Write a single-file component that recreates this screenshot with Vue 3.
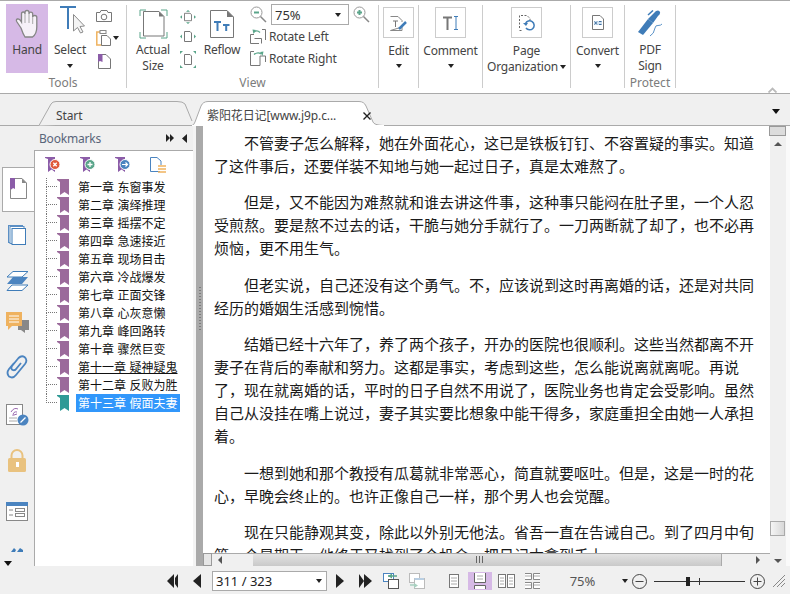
<script setup>
const bookmarks = ['第一章 东窗事发','第二章 演绎推理','第三章 摇摆不定','第四章 急速接近','第五章 现场目击','第六章 冷战爆发','第七章 正面交锋','第八章 心灰意懒','第九章 峰回路转','第十章 骤然巨变','第十一章 疑神疑鬼','第十二章 反败为胜','第十三章 假面夫妻']
const paragraphs = [
  ['不管妻子怎么解释，她在外面花心，这已是铁板钉钉、不容置疑的事实。知道','了这件事后，还要佯装不知地与她一起过日子，真是太难熬了。'],
  ['但是，又不能因为难熬就和谁去讲这件事，这种事只能闷在肚子里，一个人忍','受煎熬。要是熬不过去的话，干脆与她分手就行了。一刀两断就了却了，也不必再','烦恼，更不用生气。'],
  ['但老实说，自己还没有这个勇气。不，应该说到这时再离婚的话，还是对共同','经历的婚姻生活感到惋惜。'],
  ['结婚已经十六年了，养了两个孩子，开办的医院也很顺利。这些当然都离不开','妻子在背后的奉献和努力。这都是事实，考虑到这些，怎么能说离就离呢。再说','了，现在就离婚的话，平时的日子自然不用说了，医院业务也肯定会受影响。虽然','自己从没挂在嘴上说过，妻子其实要比想象中能干得多，家庭重担全由她一人承担','着。'],
  ['一想到她和那个教授有瓜葛就非常恶心，简直就要呕吐。但是，这是一时的花','心，早晚会终止的。也许正像自己一样，那个男人也会觉醒。'],
  ['现在只能静观其变，除此以外别无他法。省吾一直在告诫自己。到了四月中旬','第一个星期天，他终于又找到了个机会，把日记本拿到手上']
]
</script>

<template>
  <div class="app">
    <header class="ribbon">
      <section class="group g-tools">
        <div class="content">
          <div class="big hand">
            <div class="ic">
              <svg width="26" height="30" viewBox="0 0 26 30"><path d="M7 19 L3 13 Q1.500 10.500 3.500 10 Q5.500 9.500 7.500 13 V5 Q7.500 3 9.200 3 Q11 3 11 5 V3.500 Q11 1.500 13 1.500 Q15 1.500 15 3.500 V5 Q15 3.200 16.800 3.200 Q18.700 3.200 18.700 5.200 V8 Q18.700 6.500 20.700 6.500 Q22.800 6.500 22.800 8.500 V18 Q22.800 25 18.500 28 H11 Q9 25 7 19Z" fill="#f6f1f8" stroke="#858585" stroke-width="1.300"/><path d="M11 5V14M15 5V14M18.700 8V15" stroke="#a8a8a8" fill="none"/></svg>
            </div>
            <div class="lbl">Hand</div>
          </div>
          <div class="big select">
            <div class="ic">
              <svg width="26" height="29" viewBox="0 0 26 29"><path d="M0 2H16M8 2V24" stroke="#3f7cb8" stroke-width="2" fill="none"/><path d="M13.500 9.500 L24.500 21 L20 21.500 L23 27 L20.500 28 L17.500 22.500 L13.500 26Z" fill="#f4f4f4" stroke="#8c8c8c"/></svg>
            </div>
            <div class="lbl">Select</div>
            <span class="caret"></span>
          </div>
          <div class="minis">
            <svg width="16" height="13" viewBox="0 0 16 13"><path d="M.5 3.500H4L5 1.500H11L12 3.500H15.500V12.500H.5Z" fill="#fff" stroke="#777"/><circle cx="8" cy="8" r="2.800" fill="none" stroke="#777"/></svg>
            <div class="mini-row">
              <svg width="16" height="16" viewBox="0 0 16 16"><path d="M6 2H.8V15H6" fill="none" stroke="#efb25f" stroke-width="1.500"/><rect x="4" y=".5" width="6" height="3" fill="#fff" stroke="#888"/><path d="M5.500 5.500H11L14.500 9V15.500H5.500Z" fill="#fff" stroke="#777"/></svg>
              <span class="caret side"></span>
            </div>
            <svg width="13" height="15" viewBox="0 0 13 15"><path d="M.5.500H8L12.500 5V14.500H.5Z" fill="#fff" stroke="#777"/><path d="M0 0H4.500V8L2 7L0 8Z" fill="#8b5ca8"/></svg>
          </div>
        </div>
        <div class="glabel">Tools</div>
      </section>

      <section class="group g-view">
        <div class="content">
          <div class="big actual">
            <div class="ic">
              <svg width="29" height="30" viewBox="0 0 29 30"><path d="M1 7V1H7M22 1H28V7M1 23V29H7M22 29H28V23" fill="none" stroke="#5aa58a"/><path d="M4.500 2.500H20L25 7.500V27H4.500Z" fill="#fff" stroke="#777"/><path d="M20 2.500V7.500H25Z" fill="#777"/></svg>
            </div>
            <div class="lbl">Actual</div>
            <div class="lbl">Size</div>
          </div>
          <div class="fits">
            <svg width="16" height="14" viewBox="0 0 16 17" preserveAspectRatio="none"><path d="M4.500 4H10L11.500 5.500V13H4.500Z" fill="#fff" stroke="#777"/><path d="M8 0L10 2H6ZM8 17L10 15H6ZM0 8.500L2 6.500V10.500ZM16 8.500L14 6.500V10.500Z" fill="#5aa58a"/></svg>
            <svg width="16" height="13" viewBox="0 0 16 13"><path d="M4.500 1.500H10L11.500 3V11.500H4.500Z" fill="#fff" stroke="#777"/><path d="M0 6.500L2 4.500V8.500ZM16 6.500L14 4.500V8.500Z" fill="#5aa58a"/></svg>
            <svg class="fit3" width="16" height="17" viewBox="0 0 16 17"><path d="M4.500 3.500H10L11.500 5V13.500H4.500Z" fill="#fff" stroke="#777"/><path d="M0 0H3L0 3ZM16 0V3L13 0ZM0 17V14L3 17ZM16 17H13L16 14Z" fill="#5aa58a"/></svg>
          </div>
          <div class="big reflow">
            <div class="ic">
              <svg width="24" height="28" viewBox="0 0 24 28"><path d="M.5.500H17L23.500 7V27.500H.500Z" fill="#fff" stroke="#777"/><path d="M17 .5V7H23.500Z" fill="#777"/><path d="M4 12H11M7.500 12V21M13 15H19.500M16.200 15V21" stroke="#3f7cb8" stroke-width="2" fill="none"/></svg>
            </div>
            <div class="lbl">Reflow</div>
          </div>
          <div class="viewctl">
            <div class="zoomrow">
              <svg width="17" height="17" viewBox="0 0 17 17"><circle cx="6.500" cy="6.500" r="5.500" fill="#fff" stroke="#999"/><path d="M4 6.500H9" stroke="#5aa58a" stroke-width="2"/><path d="M10.500 10.500L16 16" stroke="#888" stroke-width="1.500"/></svg>
              <div class="combo"><span>75%</span><span class="caret"></span></div>
              <svg width="17" height="17" viewBox="0 0 17 17"><circle cx="6.500" cy="6.500" r="5.500" fill="#fff" stroke="#999"/><path d="M4 6.500H9M6.500 4V9" stroke="#5aa58a" stroke-width="2"/><path d="M10.500 10.500L16 16" stroke="#888" stroke-width="1.500"/></svg>
            </div>
            <div class="rot">
              <svg width="16" height="16" viewBox="0 0 16 16"><path d="M12 1.500H15.500V12M9 15.500H.5V6.500H4" fill="none" stroke="#777"/><path d="M4.500 10.500H11.500V15.500" fill="none" stroke="#777"/><path d="M10 4.500Q7 1.500 4 4" fill="none" stroke="#5aa58a" stroke-width="1.300"/><path d="M2.500 1.500L6 2 3.500 6Z" fill="#5aa58a"/></svg>
              <span>Rotate Left</span>
            </div>
            <div class="rot">
              <svg width="16" height="16" viewBox="0 0 16 16"><path d="M4 1.500H.5V15.500H10V6H15.500V12" fill="none" stroke="#777"/><path d="M4 4.500Q8 1.500 11 4" fill="none" stroke="#5aa58a" stroke-width="1.300"/><path d="M13.500 1.500L10 2 12.500 6Z" fill="#5aa58a"/></svg>
              <span>Rotate Right</span>
            </div>
          </div>
        </div>
        <div class="glabel">View</div>
      </section>

      <section class="group g-edit">
        <div class="content center">
          <div class="box"><svg width="18" height="18" viewBox="0 0 18 18"><path d="M.5 2.500H8L12 6.500V8M12 13V16.500H.5Z" fill="none" stroke="#888"/><path d="M3 7H8M5.500 7V13" stroke="#777" fill="none"/><path d="M9 15L16 8" stroke="#3f7cb8" stroke-width="2.500"/></svg></div>
          <div class="lbl tl">Edit</div><span class="caret"></span>
        </div>
      </section>
      <section class="group g-comment">
        <div class="content center">
          <div class="box"><svg width="16" height="14" viewBox="0 0 16 14"><path d="M0 1.500H9M4.500 1.500V14" stroke="#777" stroke-width="2" fill="none"/><path d="M11 .5H15M13 .5V13.500M11 13.500H15" stroke="#3f7cb8" fill="none"/></svg></div>
          <div class="lbl tl">Comment</div><span class="caret"></span>
        </div>
      </section>
      <section class="group g-page">
        <div class="content center">
          <div class="box"><svg width="16" height="16" viewBox="0 0 16 16"><path d="M.5 13V.5H8L11 3.500V5M.5 15.500H4" fill="none" stroke="#666" stroke-dasharray="2 1.500"/><path d="M6.500 8.500A4.500 4.500 0 1 1 7 13" fill="none" stroke="#3f7cb8" stroke-width="1.500"/><path d="M4 8H9L7 11Z" fill="#3f7cb8"/></svg></div>
          <div class="lbl tl">Page</div>
          <div class="lbl org">Organization<span class="caret inline"></span></div>
        </div>
      </section>
      <section class="group g-convert">
        <div class="content center">
          <div class="box"><svg width="12" height="15" viewBox="0 0 12 15"><path d="M.5.500H8L11.500 4V14.500H.5Z" fill="#fff" stroke="#777"/><path d="M2 6H10V10H2Z" fill="#cfe0ef"/><path d="M2.500 6.500L5 9.500M5 6.500L2.500 9.500M7 6.500H9.500M7 9.500H9.500" stroke="#3f6f9f" fill="none"/></svg></div>
          <div class="lbl tl">Convert</div><span class="caret"></span>
        </div>
      </section>
      <section class="group g-pdf">
        <div class="content">
          <div class="big sign">
            <div class="ic">
              <svg width="28" height="28" viewBox="0 0 28 28"><path d="M2 22L12 9L17 13L7 25Z" fill="#3f7cb8"/><path d="M12 9L20 1Q23 -.5 24 2Q24.500 4 22 6L17 13Z" fill="#3f7cb8"/><path d="M12 5L17 .5" stroke="#3f7cb8" stroke-width="1.500"/><path d="M14 26Q18 24 19 18Q19.500 15 22 15.500Q25 15.500 26 14" fill="none" stroke="#5b93c8"/></svg>
            </div>
            <div class="lbl">PDF</div>
            <div class="lbl">Sign</div>
          </div>
        </div>
        <div class="glabel">Protect</div>
      </section>
      <div class="collapse"><svg width="9" height="6" viewBox="0 0 9 6"><path d="M.5 5.500L4.500 1.500L8.500 5.500" fill="none" stroke="#bbb" stroke-width="1.800"/></svg></div>
    </header>

    <nav class="tabbar">
      <div class="tab start">
        <svg class="tabshape" width="154" height="25" viewBox="0 0 154 25"><path d="M0 24.500 L12 3 Q13.500 .5 17 .5 H138 Q144 .5 146 3 L153 20" fill="#f0f0f0" stroke="#aaa"/></svg>
        <span class="tabtext">Start</span>
      </div>
      <div class="tab active">
        <svg class="tabshape" width="192" height="25" viewBox="0 0 192 25"><path d="M0 24.500 Q2 24 3 21 L9 5 Q11 .5 16 .5 H167 Q172 .5 174 5 L181 21 Q182 24 191 24.500 V25 H0Z" fill="#fff" stroke="#aaa"/><path d="M0 25H192" stroke="#fff" stroke-width="2"/></svg>
        <span class="tabtext">紫阳花日记[www.j9p.c...</span>
        <svg class="tabx" width="8" height="8" viewBox="0 0 8 8"><path d="M.5.500L7.500 7.500M7.500.500L.5 7.500" stroke="#222" stroke-width="1.400"/></svg>
      </div>
      <span class="spacer"></span>
      <span class="tabmenu"></span>
    </nav>

    <main class="main">
      <aside class="left">
        <div class="bmhead">
          <span class="bmtitle">Bookmarks</span>
          <svg width="8" height="8" viewBox="0 0 8 8"><path d="M0 0L4 4L0 8ZM4 0L8 4L4 8Z" fill="#222"/></svg>
          <svg class="bmcollapse" width="5" height="9" viewBox="0 0 5 9"><path d="M5 0V9L0 4.500Z" fill="#222"/></svg>
        </div>
        <div class="leftbody">
          <div class="rail">
            <div class="railtab">
              <svg width="17" height="21" viewBox="0 0 17 21"><path d="M.5.500H12L16.500 5V20.500H.5Z" fill="#fff" stroke="#888"/><path d="M12 .5V5H16.500Z" fill="#888"/><path d="M0 0H5V11L3 10L1.500 11.500L0 10.500Z" fill="#8b5ca8"/></svg>
            </div>
            <div class="ri r46"><svg width="18" height="20" viewBox="0 0 18 20"><rect x=".5" y=".5" width="14" height="17" fill="none" stroke="#5b8fc4"/><rect x="2" y="1.500" width="14" height="17" fill="#fff" stroke="#5b8fc4"/><rect x="4" y="3.500" width="13.500" height="16" fill="#fff" stroke="#3f7cb8"/></svg></div>
            <div class="ri r46"><svg width="23" height="20" viewBox="0 0 23 20"><path d="M7 .5H22L16 6H1Z" fill="#fff" stroke="#3f7cb8"/><path d="M7 6H22L16 13H1Z" fill="#4b84c0"/><path d="M6 14H22L16 19.500H1Z" fill="#fff" stroke="#3f7cb8"/></svg></div>
            <div class="ri r38"><svg width="23" height="22" viewBox="0 0 23 22"><path d="M12 8H23V18H19V21L15 18H12Z" fill="#888"/><path d="M0 0H16V14H6L2 18V14H0Z" fill="#efb25f"/><path d="M3 4H13M3 7H13M3 10H13" stroke="#fff"/></svg></div>
            <div class="ri r50"><svg width="22" height="24" viewBox="0 0 22 24"><path d="M8 8L3 14Q0 18 3 21.500Q7 24 10 20L19 9Q22 5 18.500 2Q15.500 0 12.500 3L6 11Q4.500 13.500 6.500 15Q9 16 10.500 13.500L15 8" fill="none" stroke="#4b84c0" stroke-width="1.800"/></svg></div>
            <div class="ri r46"><svg width="23" height="22" viewBox="0 0 23 22"><rect x=".5" y=".5" width="16" height="20" fill="#fff" stroke="#888"/><path d="M5 8Q8 3 12 5M7 12Q7 7 11 8M8 11L11 10" fill="none" stroke="#9b6ab0"/><path d="M3 14H11M3 17H11" stroke="#aaa"/><circle cx="17" cy="16" r="5.500" fill="#4b84c0"/><path d="M14.500 18.500L19.500 13.500" stroke="#fff" stroke-width="1.300"/></svg></div>
            <div class="ri r44"><svg width="18" height="23" viewBox="0 0 18 23"><path d="M3.500 10V6.500A5.500 5.500 0 0 1 14.500 6.500V10" fill="none" stroke="#e9c27f" stroke-width="2"/><rect x="0" y="9" width="18" height="14" rx="1.500" fill="#e9c27f"/><rect x="8" y="13" width="3" height="5" fill="#fff"/></svg></div>
            <div class="ri r58"><svg width="22" height="19" viewBox="0 0 22 19"><rect x=".5" y=".5" width="21" height="18" fill="#fff" stroke="#888"/><rect x="0" y="0" width="22" height="4" fill="#4b84c0"/><path d="M3 8H7M3 13H7" stroke="#888"/><rect x="9.500" y="6.500" width="9" height="3" fill="none" stroke="#888"/><rect x="9.500" y="11.500" width="9" height="3" fill="none" stroke="#888"/></svg></div>
            <div class="ri r24"><svg width="12" height="8" viewBox="0 0 12 8"><path d="M0 4L3 0L5 2L4 4ZM6 4L9 0L12 2V4Z" fill="#3f7cb8"/></svg></div>
            <span class="raildown"></span>
          </div>
          <div class="panel">
            <div class="bmtools">
              <svg width="16" height="16" viewBox="0 0 16 16"><path d="M0 0H10V15L6.500 12.500L3 15V2L0 1Z" fill="#8b5ca8"/><circle cx="10" cy="7.500" r="5" fill="#e05a3c" stroke="#fff"/><path d="M8.300 5.800L11.700 9.200M11.700 5.800L8.300 9.200" stroke="#fff" stroke-width="1.300"/></svg>
              <svg width="16" height="16" viewBox="0 0 16 16"><path d="M0 0H10V15L6.500 12.500L3 15V2L0 1Z" fill="#8b5ca8"/><circle cx="10" cy="7.500" r="5" fill="#5aa58a" stroke="#fff"/><path d="M7.500 7.500H12.500M10 5V10" stroke="#fff" stroke-width="1.300"/></svg>
              <svg width="16" height="16" viewBox="0 0 16 16"><path d="M0 0H10V15L6.500 12.500L3 15V2L0 1Z" fill="#8b5ca8"/><circle cx="10" cy="7.500" r="5" fill="#4b84c0" stroke="#fff"/><path d="M7 7.500H12.500M10.500 5.500L12.500 7.500L10.500 9.500" stroke="#fff" stroke-width="1.200" fill="none"/></svg>
              <svg width="16" height="16" viewBox="0 0 16 16"><path d="M10 14.500H.5V.5H7L11 4V8" fill="#fff" stroke="#4b84c0"/><path d="M8 9H16M8 12H16M8 15H16" stroke="#efb25f" stroke-width="1.500"/></svg>
            </div>
            <ul class="tree">
              <li v-for="(b, i) in bookmarks" :key="b" class="node" :class="{ last: i === bookmarks.length - 1 }">
                <span class="conn"></span>
                <svg class="mark" width="12" height="16" viewBox="0 0 12 16"><path d="M0 0H12V16L7.500 13L3 16V3L0 1Z" :fill="i === bookmarks.length - 1 ? '#2f9a96' : '#9b6a9b'"/></svg>
                <span class="bmtext" :class="{ sel: i === bookmarks.length - 1, hov: i === 10 }">{{ b }}</span>
              </li>
            </ul>
          </div>
        </div>
      </aside>
      <div class="splitter"></div>
      <div class="sash"><span class="grip"></span></div>
      <div class="doccol">
        <article class="doc">
          <p v-for="(p, i) in paragraphs" :key="i" class="para">
            <span v-for="(l, j) in p" :key="j" class="line" :class="{ first: j === 0 }">{{ l }}</span>
          </p>
        </article>
        <div class="hscroll">
          <span class="hbox"></span>
          <span class="harrow"><i class="tri-left"></i></span>
          <span class="hthumb"><i class="hgrip"></i></span>
          <span class="harrow right"><i class="tri-right"></i></span>
        </div>
      </div>
      <div class="vscroll">
        <span class="vbox"></span>
        <span class="varrow"><i class="tri-up"></i></span>
        <span class="spacer"></span>
        <span class="vthumb"></span>
        <span class="vend"><i class="tri-down"></i></span>
      </div>
    </main>

    <footer class="status">
      <svg class="s-first" width="12" height="14" viewBox="0 0 12 14"><path d="M8 0V14L1 7ZM12 0V14L9 10V4Z" fill="#222"/></svg>
      <svg class="s-prev" width="8" height="14" viewBox="0 0 8 14"><path d="M8 0V14L0 7Z" fill="#222"/></svg>
      <div class="pagebox"><span>311 / 323</span><span class="caret"></span></div>
      <svg class="s-next" width="8" height="14" viewBox="0 0 8 14"><path d="M0 0V14L8 7Z" fill="#222"/></svg>
      <svg class="s-last" width="13" height="14" viewBox="0 0 13 14"><path d="M0 0V14L5 7ZM5 0V14L13 7Z" fill="#222"/></svg>
      <svg class="s-i1" width="16" height="16" viewBox="0 0 16 16"><rect x=".5" y=".5" width="10" height="8" fill="#fff" stroke="#4b84c0"/><rect x="5.500" y="6.500" width="10" height="9" fill="#fff" stroke="#555"/><path d="M5 3H14" stroke="#5aa58a" stroke-width="1.500"/><path d="M9 .5V5.500L5 3Z" fill="#5aa58a"/></svg>
      <svg class="s-i2" width="16" height="16" viewBox="0 0 16 16"><rect x=".5" y=".5" width="10" height="9" fill="#fff" stroke="#bbb"/><rect x="5.500" y="5.500" width="10" height="10" fill="#fff" stroke="#bbb"/><path d="M5.500 6H15" stroke="#b9cfe3" stroke-width="2"/><path d="M1 12H6" stroke="#a9d0c0" stroke-width="1.500"/><path d="M5 10V15L9 12.500Z" fill="#a9d0c0"/></svg>
      <svg class="s-v1" width="10" height="14" viewBox="0 0 10 14"><rect x=".5" y=".5" width="9" height="13" fill="#fff" stroke="#777"/><path d="M2 4H8M2 7H8M2 10H8" stroke="#aaa"/></svg>
      <span class="v-active"><svg width="12" height="16" viewBox="0 0 12 16"><path d="M.5 0V9.500H11.500V0M.5 16V12.500H11.500V16" fill="#fff" stroke="#666"/><path d="M3 3H9M3 6H9" stroke="#aaa"/></svg></span>
      <svg class="s-v3" width="17" height="14" viewBox="0 0 17 14"><rect x=".5" y=".5" width="7" height="13" fill="#fff" stroke="#777"/><rect x="9.500" y=".5" width="7" height="13" fill="#fff" stroke="#777"/><path d="M2 4H6M2 7H6M2 10H6M11 4H15M11 7H15M11 10H15" stroke="#aaa"/></svg>
      <svg class="s-v4" width="15" height="16" viewBox="0 0 15 16"><path d="M0 .5H6.500V6.500H0M15 .5H8.500V6.500H15M0 9.500H6.500V15.500H0M15 9.500H8.500V15.500H15" fill="#fff" stroke="#888"/><path d="M0 3H6M9 3H15M0 12H6M9 12H15" stroke="#aaa"/></svg>
      <span class="zoomtext">75%</span>
      <span class="caret"></span>
      <svg class="s-minus" width="15" height="15" viewBox="0 0 15 15"><circle cx="7.500" cy="7.500" r="7" fill="none" stroke="#444"/><path d="M3.500 7.500H11.500" stroke="#444"/></svg>
      <div class="slider"><i class="thumb"></i><i class="tick"></i></div>
      <svg class="s-plus" width="15" height="15" viewBox="0 0 15 15"><circle cx="7.500" cy="7.500" r="7" fill="none" stroke="#444"/><path d="M3.500 7.500H11.500M7.500 3.500V11.500" stroke="#444"/></svg>
      <svg class="s-grip" width="14" height="14" viewBox="0 0 14 14"><path d="M1 13L13 1M5 13L13 5M9 13L13 9" stroke="#888" fill="none"/></svg>
    </footer>
  </div>
</template>

<style scoped>
.app { width: 790px; height: 594px; display: flex; flex-direction: column; overflow: hidden; background: #f0f0f0; font-family: "Noto Sans", "Noto Sans CJK SC", sans-serif; font-size: 12px; color: #444; }
.ribbon { background: #fff; border-top: 1px solid #aaa; border-bottom: 1px solid #aaa; display: flex; box-sizing: content-box; position: relative; height: 92px; }
.group { height: 83px; margin-top: 4px; border-right: 1px solid #ccc; box-sizing: border-box; display: flex; flex-direction: column; position: relative; }
.g-tools { width: 127px; } .g-view { width: 252px; } .g-edit { width: 40px; } .g-comment { width: 64px; } .g-page { width: 88px; } .g-convert { width: 54px; } .g-pdf { width: 51px; }
.content { height: 73px; display: flex; align-items: flex-start; }
.content.center { flex-direction: column; align-items: center; }
.glabel { height: 10px; line-height: 10px; text-align: center; color: #7c7c7c; white-space: nowrap; }
.big { display: flex; flex-direction: column; align-items: center; }
.ic { height: 37px; display: flex; align-items: center; justify-content: center; }
.lbl { height: 16px; line-height: 16px; white-space: nowrap; color: #444; letter-spacing: -.2px; }
.hand { width: 42px; height: 69px; margin: -1px 0 0 6px; background: #d6b9e6; padding-top: 1px; box-sizing: border-box; }
.select { width: 44px; }
.select .ic { align-items: flex-start; margin-left: 6px; width: 26px; }
.select .ic svg { margin-top: 0; }
.caret { display: inline-block; width: 0; height: 0; border-left: 3.500px solid transparent; border-right: 3.500px solid transparent; border-top: 4px solid #222; }
.select .caret { margin-top: 6px; }
.minis { display: flex; flex-direction: column; align-items: flex-start; margin: 4px 0 0 4px; gap: 8px; }
.mini-row { display: flex; align-items: center; gap: 1px; }
.minis > svg:last-child { margin-left: 2px; }
.actual { width: 50px; margin-left: 1px; }
.fits { width: 18px; margin: 5px 0 0 1px; display: flex; flex-direction: column; align-items: center; gap: 6px; }
.fit3 { margin-top: 2px; }
.reflow { width: 44px; margin-left: 3px; }
.viewctl { margin: -1px 0 0 6px; width: 122px; }
.zoomrow { display: flex; align-items: center; height: 21px; gap: 4px; }
.combo { width: 78px; height: 21px; box-sizing: border-box; border: 1px solid #aaa; display: flex; align-items: center; justify-content: space-between; padding: 0 7px 0 3px; font-size: 13px; color: #333; }
.rot { display: flex; align-items: center; height: 22px; gap: 3px; letter-spacing: -.18px; }
.box { width: 31px; height: 31px; box-sizing: border-box; border: 1px solid #ccc; display: flex; align-items: center; justify-content: center; margin-top: 2px; }
.tl { margin-top: 5px; }
.center .caret { margin-top: 5px; }
.org { display: flex; align-items: center; gap: 2px; }
.center .caret.inline { margin-top: 0; }
.sign { width: 100%; }
.collapse { margin: 79px 0 0 92px; height: 8px; }
.tabbar { height: 31px; border-bottom: 1px solid #aaa; display: flex; position: relative; align-items: flex-end; }
.tab { position: relative; height: 25px; margin-bottom: -1px; }
.tabshape { position: absolute; left: 0; top: 0; }
.tabtext { position: absolute; top: 6px; line-height: 18px; white-space: nowrap; z-index: 1; letter-spacing: -.1px; }
.start { width: 154px; margin-left: 39px; }
.start .tabtext { left: 17px; }
.active { width: 192px; margin-left: -1px; }
.active .tabtext { left: 15px; }
.tabx { position: absolute; left: 171px; top: 11px; }
.spacer { flex: 1; }
.tabmenu { width: 0; height: 0; border-left: 4.500px solid transparent; border-right: 4.500px solid transparent; border-top: 5px solid #111; margin: 0 10px 11px 0; }
.main { height: 440px; display: flex; background: #f0f0f0; }
.left { width: 193px; display: flex; flex-direction: column; }
.bmhead { height: 24px; display: flex; align-items: center; padding-left: 39px; }
.bmtitle { width: 127px; color: #59657a; letter-spacing: -.2px; }
.bmcollapse { margin-left: 8px; }
.leftbody { flex: 1; display: flex; min-height: 0; }
.rail { width: 34px; padding-top: 17px; position: relative; display: flex; flex-direction: column; overflow: hidden; box-sizing: border-box; }
.railtab { width: 32px; height: 45px; margin-left: 2px; box-sizing: border-box; background: #fff; border: 1px solid #aaa; border-right: 0; display: flex; align-items: flex-start; justify-content: center; padding-top: 10px; flex: none; }
.ri { display: flex; align-items: center; justify-content: center; flex: none; }
.r46 { height: 46px; } .r38 { height: 38px; } .r50 { height: 50px; } .r44 { height: 44px; } .r58 { height: 58px; } .r24 { height: 24px; }
.raildown { position: absolute; left: 4px; bottom: 0; width: 0; height: 0; border-left: 4.500px solid transparent; border-right: 4.500px solid transparent; border-top: 5px solid #111; }
.panel { flex: 1; background: #fff; border-left: 1px solid #aaa; border-top: 1px solid #aaa; min-width: 0; position: relative; }
.bmtools { height: 27px; display: flex; align-items: center; padding-left: 10px; gap: 19px; }
.tree { list-style: none; margin: 0; padding: 0 0 0 11px; }
.node { height: 18px; display: flex; align-items: flex-start; position: relative; }
.conn { width: 11px; height: 9px; box-sizing: border-box; border-left: 1px dotted #777; border-bottom: 1px dotted #777; flex: none; }
.node:not(.last)::after { content: ""; position: absolute; left: 0; top: 9px; height: 9px; border-left: 1px dotted #777; }
.mark { flex: none; margin-top: 1px; }
.bmtext { margin-left: 7px; font-family: "Noto Sans CJK SC", sans-serif; font-size: 12px; line-height: 18px; height: 18px; padding: 0 2px; color: #111; white-space: pre; word-spacing: .8px; }
.bmtext.hov { text-decoration: underline; }
.bmtext.sel { background: #3197fb; color: #fff; width: 100px; }
.splitter { width: 3px; background: #f4f4f4; }
.sash { width: 7px; background: #aaa; position: relative; }
.grip { position: absolute; left: 3px; top: 160px; height: 45px; width: 2px; background-image: radial-gradient(#7d7d7d 40%, transparent 45%); background-size: 2px 3px; }
.doccol { width: 567px; display: flex; flex-direction: column; background: #fff; }
.doc { height: 427px; overflow: hidden; padding: 5px 0 0 11px; box-sizing: border-box; font-family: "Noto Sans CJK SC", sans-serif; font-size: 15px; line-height: 23px; color: #1a1a1a; }
.para { margin: 0 0 13.400px; }
.line { display: block; white-space: nowrap; }
.line.first { text-indent: 30px; }
.hscroll { height: 13px; display: flex; background: #f0f0f0; border-top: 1px solid #aaa; box-sizing: border-box; }
.hbox { width: 9px; background: #e6e6e6; border: 1px solid #999; box-sizing: border-box; margin-top: -1px; height: 13px; }
.harrow { width: 41px; display: flex; align-items: center; padding-left: 6px; box-sizing: border-box; }
.harrow.right { width: 48px; padding-left: 34px; }
.hthumb { width: 469px; background: linear-gradient(#e3e3e3, #c9c9c9); border-right: 1px solid #aaa; box-sizing: border-box; position: relative; }
.hgrip { position: absolute; left: 223px; top: 2px; width: 7px; height: 7px; background: repeating-linear-gradient(90deg, #666 0 1px, transparent 1px 3px); }
.tri-left, .tri-right, .tri-up, .tri-down { display: block; width: 0; height: 0; }
.tri-left { border-top: 4px solid transparent; border-bottom: 4px solid transparent; border-right: 4px solid #555; }
.tri-right { border-top: 4px solid transparent; border-bottom: 4px solid transparent; border-left: 4px solid #555; }
.tri-up { border-left: 4px solid transparent; border-right: 4px solid transparent; border-bottom: 4px solid #555; }
.tri-down { border-left: 4px solid transparent; border-right: 4px solid transparent; border-top: 4px solid #555; }
.vscroll { width: 20px; display: flex; flex-direction: column; background: linear-gradient(90deg, #f0f0f0 0 16px, #fafafa 16px); position: relative; }
.vbox { width: 17px; height: 10px; background: #dcdcdc; border: 1px solid #999; box-sizing: border-box; margin-left: -1px; flex: none; }
.varrow { height: 16px; display: flex; align-items: center; padding-left: 4px; flex: none; }
.vthumb { width: 15px; height: 15px; background: linear-gradient(90deg, #f5f5f5, #d8d8d8); border: 1px solid #aaa; box-sizing: border-box; flex: none; margin-bottom: 19px; }
.vend { height: 11px; display: flex; align-items: center; padding-left: 4px; flex: none; }
.status { height: 28px; display: flex; align-items: center; padding: 2px 0 0 166px; box-sizing: border-box; flex: none; }
.status > * { flex: none; }
.s-prev { margin-left: 15px; }
.pagebox { width: 115px; height: 20px; margin-left: 11px; box-sizing: border-box; border: 1px solid #aaa; background: #fff; display: flex; align-items: center; justify-content: space-between; padding: 0 4px 0 3px; font-size: 13px; color: #222; }
.s-next { margin-left: 9px; } .s-last { margin-left: 15px; } .s-i1 { margin-left: 11px; } .s-i2 { margin-left: 10px; } .s-v1 { margin-left: 24px; }
.v-active { width: 24px; height: 18px; margin-left: 9px; background: #d6b9e6; display: flex; align-items: center; justify-content: center; }
.s-v3 { margin-left: 6px; } .s-v4 { margin-left: 10px; }
.zoomtext { width: 56px; margin-left: 13px; text-align: center; font-size: 13px; color: #555; padding-left: 3px; box-sizing: border-box; }
.status .caret { margin-left: 13px; }
.pagebox .caret { margin-left: 0; }
.s-minus { margin-left: 4px; }
.slider { width: 91px; height: 1px; margin-left: 7px; background: #333; position: relative; }
.thumb { position: absolute; left: 32px; top: -4px; width: 4px; height: 9px; background: #222; }
.tick { position: absolute; left: 45px; top: -3px; width: 1px; height: 7px; background: #333; }
.s-plus { margin-left: 5px; } .s-grip { margin-left: 7px; }
</style>
